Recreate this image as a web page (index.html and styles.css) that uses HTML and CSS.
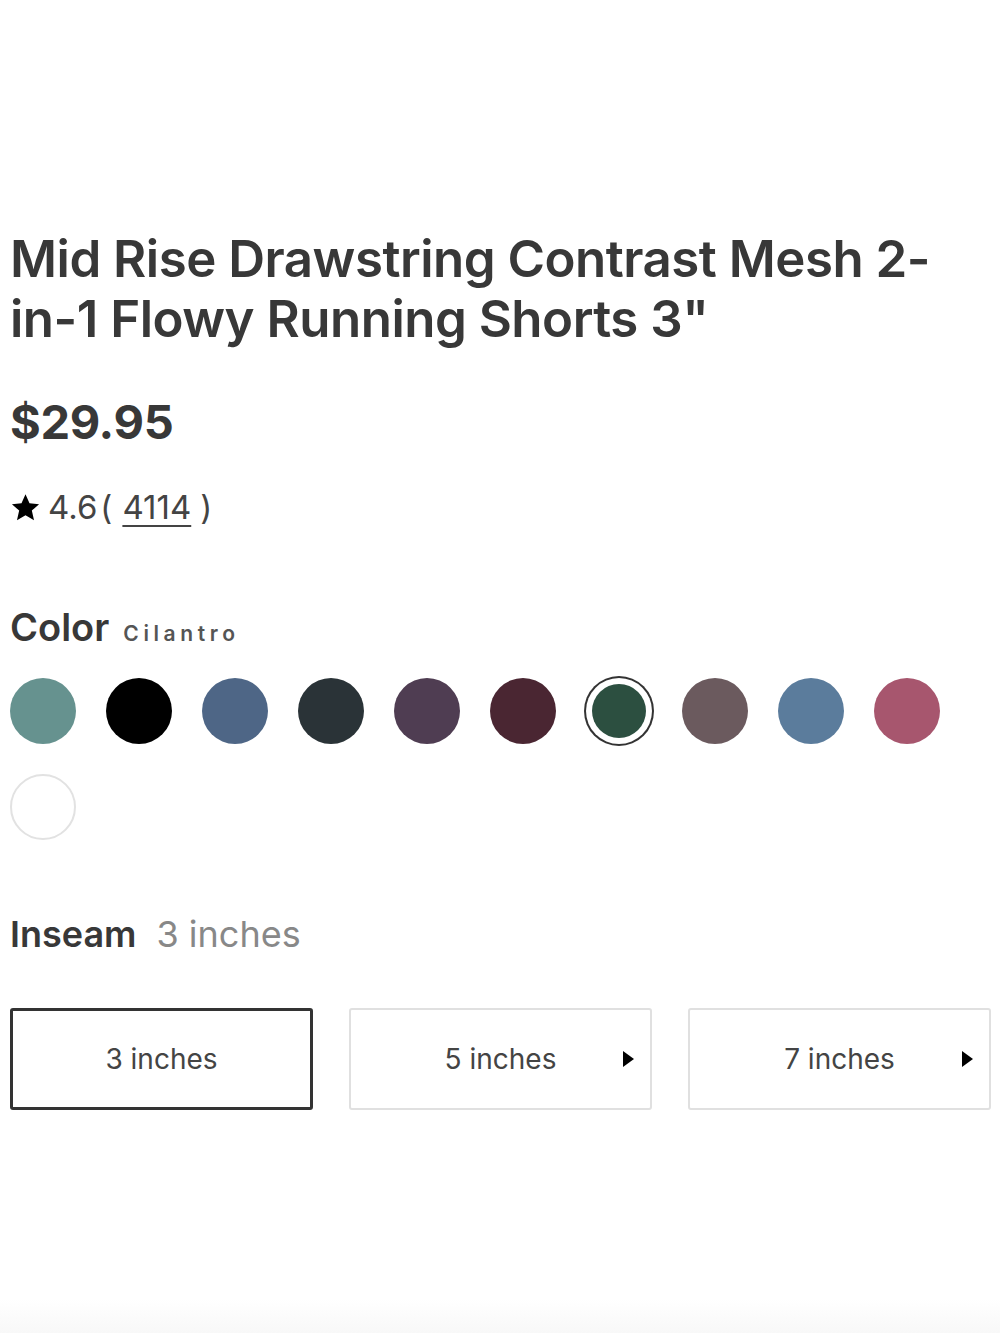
FILE: index.html
```html
<!DOCTYPE html>
<html lang="en">
<head>
<meta charset="utf-8">
<title>Mid Rise Drawstring Contrast Mesh 2-in-1 Flowy Running Shorts 3"</title>
<link rel="stylesheet" href="styles.css">
</head>
<body>
<main class="product">
  <h1 class="title">Mid Rise Drawstring Contrast Mesh 2-in-1 Flowy Running Shorts 3"</h1>
  <div class="price">$29.95</div>
  <div class="rating">
    <svg class="star" viewBox="0 0 24 24" aria-hidden="true"><path d="M12 1.8l3.1 6.9 7.4.7-5.6 5 1.7 7.4L12 18l-6.6 3.8 1.7-7.4-5.6-5 7.4-.7z"/></svg>
    <span class="score">4.6</span><span class="paren open">(</span><a class="count" href="#">4114</a><span class="paren close">)</span>
  </div>

  <section class="option color">
    <div class="option-label"><span class="name">Color</span><span class="value-sm">Cilantro</span></div>
    <div class="swatches">
      <span class="swatch" style="background:#66928f"></span>
      <span class="swatch" style="background:#000000"></span>
      <span class="swatch" style="background:#4e6686"></span>
      <span class="swatch" style="background:#2a3337"></span>
      <span class="swatch" style="background:#4f3d52"></span>
      <span class="swatch" style="background:#4a2632"></span>
      <span class="swatch selected" style="background:#2c4f40"></span>
      <span class="swatch" style="background:#6b5a5e"></span>
      <span class="swatch" style="background:#5b7c9c"></span>
      <span class="swatch" style="background:#a7566e"></span>
      <span class="swatch white" style="background:#ffffff"></span>
    </div>
  </section>

  <section class="option inseam">
    <div class="option-label"><span class="name">Inseam</span><span class="value">3 inches</span></div>
    <div class="sizes">
      <button class="size active">3 inches</button>
      <button class="size">5 inches<span class="arrow"></span></button>
      <button class="size">7 inches<span class="arrow"></span></button>
    </div>
  </section>
</main>
<div class="bottom-fade"></div>
</body>
</html>
```
FILE: styles.css
```css
html, body {
  margin: 0;
  padding: 0;
  background: #fff;
}

body {
  font-family: Inter, "Open Sans", sans-serif;
  color: #383838;
  width: 1000px;
  height: 1333px;
  position: relative;
  overflow: hidden;
}

.product {
  padding: 229px 10px 0 10px;
}

.title {
  margin: 0;
  font-size: 51px;
  line-height: 60px;
  font-weight: 600;
  letter-spacing: -0.5px;
  color: #383838;
  width: 960px;
}

.price {
  margin-top: 45px;
  font-size: 47px;
  font-weight: 700;
  line-height: 56px;
  letter-spacing: -0.3px;
  color: #383838;
}

.rating {
  margin-top: 37px;
  display: flex;
  align-items: center;
  font-size: 33px;
  line-height: 40px;
  color: #444;
}

.star {
  width: 31px;
  height: 31px;
  margin-right: 7px;
  fill: #000;
}

.paren.open {
  margin: 0 10px 0 3px;
}

.paren.close {
  margin-left: 9px;
}

.count {
  color: #444;
  text-decoration: underline;
  text-underline-offset: 6px;
  text-decoration-thickness: 2px;
}

.option.color {
  margin-top: 77px;
}

.option-label {
  display: flex;
  align-items: baseline;
}

.color .option-label {
  line-height: 46px;
}

.name {
  font-size: 38px;
  font-weight: 600;
  color: #383838;
}

.value-sm {
  margin-left: 14px;
  font-size: 21px;
  font-weight: 600;
  letter-spacing: 4.6px;
  color: #555;
}

.inseam .option-label {
  line-height: 44px;
}

.inseam .name {
  font-size: 36px;
}

.value {
  margin-left: 20px;
  font-size: 36px;
  color: #888;
}

.swatches {
  margin-top: 21px;
  display: flex;
  flex-wrap: wrap;
  gap: 30px;
  width: 960px;
}

.swatch {
  width: 66px;
  height: 66px;
  border-radius: 50%;
  box-sizing: border-box;
}

.swatch.selected {
  box-shadow: 0 0 0 6px #fff, 0 0 0 8px #333;
  width: 54px;
  height: 54px;
  margin: 6px;
}

.swatch.white {
  border: 2px solid #e2e2e2;
}

.inseam {
  margin-top: 72px;
}

.sizes {
  margin-top: 52px;
  display: flex;
  gap: 36px;
}

.size {
  position: relative;
  flex: 0 0 303px;
  height: 102px;
  box-sizing: border-box;
  background: #fff;
  border: 2px solid #e0e0e0;
  border-radius: 3px;
  font-family: inherit;
  font-size: 28px;
  color: #444;
  padding: 0;
}

.size.active {
  border: 3px solid #333;
}

.arrow {
  position: absolute;
  right: 16px;
  top: 50%;
  margin-top: -8px;
  border-left: 11px solid #000;
  border-top: 8px solid transparent;
  border-bottom: 8px solid transparent;
}

.bottom-fade {
  position: absolute;
  left: 0;
  right: 0;
  bottom: 0;
  height: 34px;
  background: linear-gradient(#fff, #f8f8f8);
}
```
